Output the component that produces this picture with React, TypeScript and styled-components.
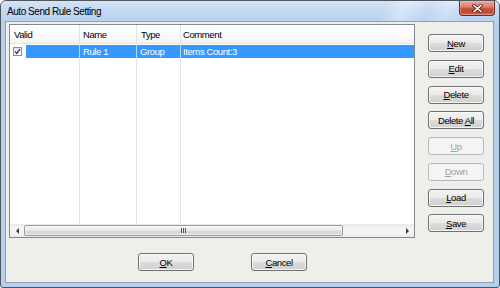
import React from "react";
import styled, { createGlobalStyle } from "styled-components";

const FONT = `"Liberation Sans", Arial, sans-serif`;

const GlobalStyle = createGlobalStyle`
  html, body { margin: 0; padding: 0; background: #ffffff; }
  body { font-family: ${FONT}; }
  * { box-sizing: border-box; }
`;

const Window = styled.div`
  width: 500px;
  height: 288px;
  display: flex;
  flex-direction: column;
  border: 1px solid #50555d;
  border-radius: 6px 6px 3px 3px;
  background: #b7d0f0;
  overflow: hidden;
`;

const TitleBar = styled.div`
  height: 20px;
  flex: none;
  display: flex;
  align-items: flex-start;
  padding: 0 4px 0 6px;
  background:
    linear-gradient(115deg, rgba(255,255,255,0) 76%, rgba(255,255,255,0.35) 80%, rgba(255,255,255,0) 85%, rgba(255,255,255,0.25) 89%, rgba(255,255,255,0) 93%),
    linear-gradient(to bottom, #d5e4f7 0%, #c4d9f3 45%, #b9d1f0 100%);
`;

const Title = styled.div`
  font-family: ${FONT};
  font-size: 10px;
  letter-spacing: -0.45px;
  line-height: 20px;
  padding-top: 1px;
  color: #000;
  white-space: nowrap;
`;

const CloseButton = styled.div`
  margin-left: auto;
  width: 36px;
  height: 15px;
  border: 1px solid #6e2b21;
  border-top: none;
  border-radius: 0 0 4px 4px;
  background: linear-gradient(to bottom, #e8a898 0%, #dc8470 40%, #c9503a 55%, #c24a33 80%, #d0735d 100%);
  box-shadow: inset 0 0 0 1px rgba(255, 220, 210, 0.35);
  display: flex;
  align-items: center;
  justify-content: center;
`;

const Client = styled.div`
  flex: 1;
  margin: 0 5px 4px 4px;
  border: 1px solid #8e9fb6;
  background: #eeeeea;
  display: flex;
  flex-direction: column;
  padding: 2px 0 0 3px;
`;

const MainRow = styled.div`
  display: flex;
  align-items: flex-start;
  gap: 13px;
`;

const ListView = styled.div`
  width: 406px;
  height: 214px;
  flex: none;
  border: 1px solid #828790;
  background: #ffffff;
  display: flex;
  flex-direction: column;
`;

const COLS = "70px 57px 44px 1fr";

const Header = styled.div`
  height: 19px;
  flex: none;
  display: grid;
  grid-template-columns: ${COLS};
  border-bottom: 1px solid #e3e4e7;
  background: linear-gradient(to bottom, #ffffff 0%, #fbfbfc 60%, #f3f4f6 100%);
`;

const HeaderCell = styled.div<{ $pad: number }>`
  padding: 2px 0 0 ${(p) => p.$pad}px;
  line-height: 16px;
  font-size: 9.5px;
  letter-spacing: -0.4px;
  color: #000;
  border-right: 1px solid #e2e3e6;
  white-space: nowrap;
  &:last-child { border-right: none; }
`;

const Body = styled.div`
  flex: 1;
  background:
    linear-gradient(#e4e4e4, #e4e4e4) 69px 0 / 1px 100% no-repeat,
    linear-gradient(#e4e4e4, #e4e4e4) 126px 0 / 1px 100% no-repeat,
    linear-gradient(#e4e4e4, #e4e4e4) 170px 0 / 1px 100% no-repeat,
    #ffffff;
`;

const Row = styled.div`
  height: 13px;
  margin-top: 1px;
  display: grid;
  grid-template-columns: ${COLS};
`;

const FirstCell = styled.div`
  display: flex;
  border-right: 1px solid #b9dbff;
`;

const CheckArea = styled.div`
  width: 16px;
  flex: none;
  background: #ffffff;
  padding: 2px 0 0 3px;
`;

const Check = styled.div`
  width: 9px;
  height: 9px;
  border: 1px solid #8e8f8f;
  background: linear-gradient(135deg, #e2e2e2, #ffffff);
  display: flex;
`;

const Selected = styled.div`
  flex: 1;
  background: #3399ff;
`;

const Cell = styled.div<{ $pad: number }>`
  background: #3399ff;
  color: #ffffff;
  font-size: 9.5px;
  letter-spacing: -0.4px;
  line-height: 13px;
  padding-left: ${(p) => p.$pad}px;
  border-right: 1px solid #b9dbff;
  white-space: nowrap;
  &:last-child { border-right: none; }
`;

const ScrollBar = styled.div`
  height: 13px;
  flex: none;
  display: flex;
  background: linear-gradient(to bottom, #e9e9e9 0%, #f4f4f4 30%, #f4f4f4 70%, #ebebeb 100%);
`;

const Arrow = styled.div`
  width: 14px;
  flex: none;
  display: flex;
  align-items: center;
  justify-content: center;
`;

const Triangle = styled.div<{ $dir: "left" | "right" }>`
  width: 0;
  height: 0;
  border-top: 3px solid transparent;
  border-bottom: 3px solid transparent;
  ${(p) => (p.$dir === "left" ? "border-right: 3px solid #3c3c3c;" : "border-left: 3px solid #3c3c3c;")}
`;

const Track = styled.div`
  flex: 1;
  display: flex;
  padding: 1px 0;
`;

const Thumb = styled.div`
  width: 319px;
  border: 1px solid #9a9a9a;
  border-radius: 2px;
  background: linear-gradient(to bottom, #f5f5f5 0%, #ececec 45%, #dcdcdc 55%, #d4d4d4 100%);
  box-shadow: inset 0 0 0 1px rgba(255,255,255,0.6);
  display: flex;
  align-items: center;
  justify-content: center;
`;

const ButtonColumn = styled.div`
  width: 56px;
  margin-top: 10px;
  display: flex;
  flex-direction: column;
  gap: 7.75px;
`;

const PushButton = styled.button`
  width: 56px;
  height: 18px;
  padding: 0;
  margin: 0;
  font-family: ${FONT};
  font-size: 9.5px;
  letter-spacing: -0.4px;
  color: #000;
  border: 1px solid #707070;
  border-radius: 3px;
  background: linear-gradient(to bottom, #f2f2f2 0%, #ebebeb 50%, #dddddd 50%, #cfcfcf 100%);
  box-shadow: inset 0 0 0 1px rgba(255, 255, 255, 0.75);
  display: flex;
  align-items: center;
  justify-content: center;
  &:disabled {
    border-color: #b5b9bc;
    background: #f4f4f4;
    color: #a3a3a3;
    box-shadow: none;
  }
`;

const Label = styled.span`
  white-space: pre;
`;

const Footer = styled.div`
  display: flex;
  gap: 57px;
  margin-top: 15px;
  padding-left: 129px;
`;

const Key = styled.span`
  text-decoration: underline;
  text-underline-offset: 1px;
`;

const buttons: { pre: string; key: string; post: string; disabled?: boolean }[] = [
  { pre: "", key: "N", post: "ew" },
  { pre: "", key: "E", post: "dit" },
  { pre: "", key: "D", post: "elete" },
  { pre: "Delete ", key: "A", post: "ll" },
  { pre: "", key: "U", post: "p", disabled: true },
  { pre: "", key: "D", post: "own", disabled: true },
  { pre: "", key: "L", post: "oad" },
  { pre: "", key: "S", post: "ave" },
];

export default function App() {
  return (
    <>
      <GlobalStyle />
      <Window>
        <TitleBar>
          <Title>Auto Send Rule Setting</Title>
          <CloseButton>
            <svg width="11" height="9" viewBox="0 0 11 9">
              <path d="M2 1.5 L9 7.5 M9 1.5 L2 7.5" stroke="#5a2018" strokeWidth="3.2" strokeLinecap="square" />
              <path d="M2 1.5 L9 7.5 M9 1.5 L2 7.5" stroke="#ffffff" strokeWidth="1.6" strokeLinecap="square" />
            </svg>
          </CloseButton>
        </TitleBar>
        <Client>
          <MainRow>
            <ListView>
              <Header>
                <HeaderCell $pad={4}>Valid</HeaderCell>
                <HeaderCell $pad={3}>Name</HeaderCell>
                <HeaderCell $pad={4}>Type</HeaderCell>
                <HeaderCell $pad={2}>Comment</HeaderCell>
              </Header>
              <Body>
                <Row>
                  <FirstCell>
                    <CheckArea>
                      <Check>
                        <svg width="7" height="7" viewBox="0 0 7 7">
                          <path d="M1 3.4 L2.8 5.4 L6 1" stroke="#2a3f6e" strokeWidth="1.3" fill="none" />
                        </svg>
                      </Check>
                    </CheckArea>
                    <Selected />
                  </FirstCell>
                  <Cell $pad={3}>Rule 1</Cell>
                  <Cell $pad={3}>Group</Cell>
                  <Cell $pad={2}>Items Count:3</Cell>
                </Row>
              </Body>
              <ScrollBar>
                <Arrow>
                  <Triangle $dir="left" />
                </Arrow>
                <Track>
                  <Thumb>
                    <svg width="6" height="5" viewBox="0 0 6 5">
                      <path d="M0.5 0 V5 M2.5 0 V5 M4.5 0 V5" stroke="#555" strokeWidth="1" />
                    </svg>
                  </Thumb>
                </Track>
                <Arrow>
                  <Triangle $dir="right" />
                </Arrow>
              </ScrollBar>
            </ListView>
            <ButtonColumn>
              {buttons.map((b, i) => (
                <PushButton key={i} disabled={b.disabled}>
                  <Label>
                    {b.pre}
                    <Key>{b.key}</Key>
                    {b.post}
                  </Label>
                </PushButton>
              ))}
            </ButtonColumn>
          </MainRow>
          <Footer>
            <PushButton>
              <Label>
                <Key>O</Key>K
              </Label>
            </PushButton>
            <PushButton>
              <Label>
                <Key>C</Key>ancel
              </Label>
            </PushButton>
          </Footer>
        </Client>
      </Window>
    </>
  );
}
